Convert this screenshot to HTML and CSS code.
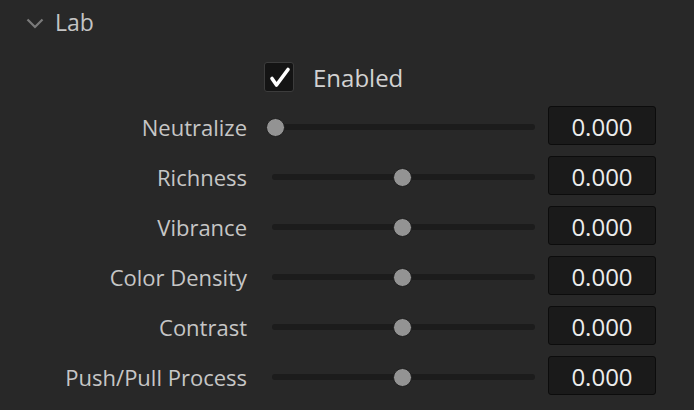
FILE: index.html
```html
<!DOCTYPE html>
<html lang="en">
    <head>
        <meta charset="UTF-8">
        <title>Lab</title>
        <link rel="stylesheet" href="styles.css">
    </head>
    <body>
        <div class="panel">
            <div class="panel-header">
                <svg class="chevron" viewBox="0 0 18 11" width="18" height="11">
                    <polyline points="1.5,1.5 9,9 16.5,1.5" fill="none" stroke="#7a7a7a" stroke-width="2.2"/>
                </svg>
                <span class="panel-title">Lab</span>
            </div>

            <label class="enable-row">
                <span class="checkbox">
                    <svg viewBox="0 0 30 30" width="30" height="30">
                        <polyline points="8,16.5 12.5,23 24,7.5" fill="none" stroke="#fff" stroke-width="3.6" stroke-linecap="round" stroke-linejoin="round"/>
                    </svg>
                </span>
                <span class="enable-label">Enabled</span>
            </label>

            <div class="rows">
                <div class="row">
                    <span class="row-label">Neutralize</span>
                    <div class="slider"><span class="thumb thumb-start"></span></div>
                    <div class="value">0.000</div>
                </div>
                <div class="row">
                    <span class="row-label">Richness</span>
                    <div class="slider"><span class="thumb"></span></div>
                    <div class="value">0.000</div>
                </div>
                <div class="row">
                    <span class="row-label">Vibrance</span>
                    <div class="slider"><span class="thumb"></span></div>
                    <div class="value">0.000</div>
                </div>
                <div class="row">
                    <span class="row-label">Color Density</span>
                    <div class="slider"><span class="thumb"></span></div>
                    <div class="value">0.000</div>
                </div>
                <div class="row">
                    <span class="row-label">Contrast</span>
                    <div class="slider"><span class="thumb"></span></div>
                    <div class="value">0.000</div>
                </div>
                <div class="row">
                    <span class="row-label">Push/Pull Process</span>
                    <div class="slider"><span class="thumb"></span></div>
                    <div class="value">0.000</div>
                </div>
            </div>
        </div>
    </body>
</html>
```

FILE: styles.css
```css
body {
    margin: 0;
    background-color: #282828;
    color: #c8c8c8;
    font-family: "Open Sans", "Noto Sans", sans-serif;
    overflow: hidden;
}

.panel {
    width: 694px;
    height: 410px;
}

.panel-header {
    height: 44px;
    display: flex;
    align-items: center;
    padding-left: 26px;
}

.chevron {
    display: block;
    margin-top: 2px;
}

.panel-title {
    margin-left: 11px;
    font-size: 23px;
    color: #c4c4c4;
}

.enable-row {
    display: flex;
    align-items: center;
    margin-top: 18px;
    padding-left: 264px;
    height: 30px;
}

.checkbox {
    width: 28px;
    height: 28px;
    background: #141414;
    border: 1px solid #3c3c3c;
    border-radius: 3px;
    position: relative;
}

.checkbox svg {
    position: absolute;
    left: -1px;
    top: -1px;
}

.enable-label {
    margin-left: 19px;
    font-size: 24px;
    color: #d2d2d2;
}

.rows {
    margin-top: 14px;
    display: flex;
    flex-direction: column;
    gap: 11px;
}

.row {
    display: grid;
    grid-template-columns: 247px 263px 108px;
    align-items: center;
    height: 39px;
}

.row-label {
    text-align: right;
    font-size: 22px;
    color: #c6c6c6;
    white-space: nowrap;
    padding-top: 2px;
}

.slider {
    position: relative;
    height: 6px;
    margin: 3px 0 0 25px;
    width: 263px;
    background: #1c1c1c;
    border-radius: 3px;
}

.thumb {
    position: absolute;
    top: 50%;
    left: 50%;
    width: 17px;
    height: 17px;
    margin: -9.5px 0 0 -10.5px;
    background: #939393;
    border: 1px solid #1f1f1f;
    border-radius: 50%;
}

.thumb.thumb-start {
    left: 0;
    margin-left: -6.5px;
}

.value {
    margin-left: 38px;
    width: 108px;
    height: 39px;
    box-sizing: border-box;
    background: #1a1a1a;
    border: 1px solid #0c0c0c;
    border-radius: 3px;
    display: flex;
    align-items: center;
    justify-content: center;
    font-size: 24px;
    color: #ececec;
    padding-top: 1px;
}
```
